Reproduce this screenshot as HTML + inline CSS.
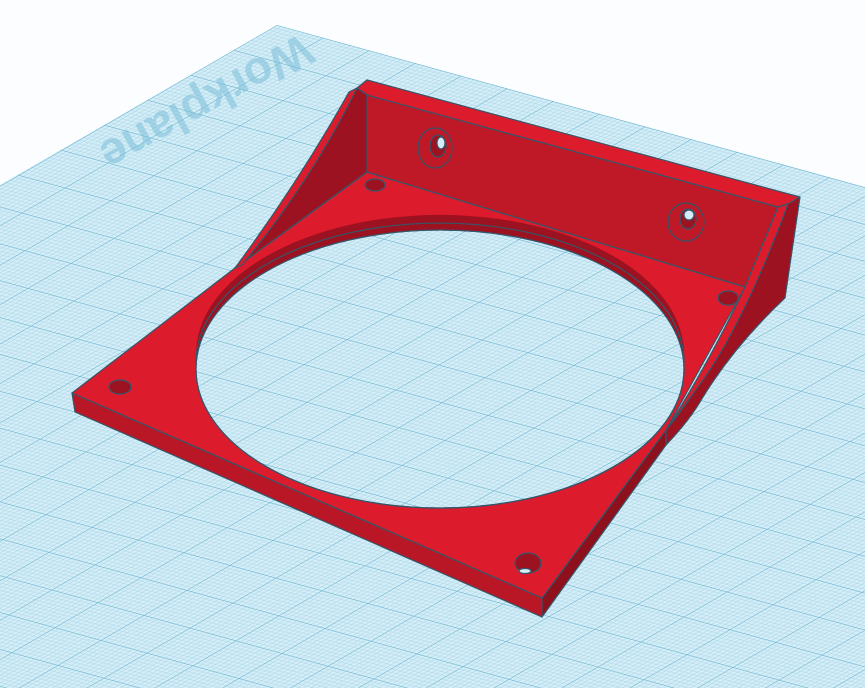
<!DOCTYPE html>
<html><head><meta charset="utf-8"><style>
html,body{margin:0;padding:0;background:#fbfdfe;}
svg{display:block}
</style></head><body>
<svg width="865" height="688" viewBox="0 0 865 688" xmlns="http://www.w3.org/2000/svg">
<defs>
<pattern id="g" patternUnits="userSpaceOnUse" width="10" height="10" patternTransform="matrix(4.6 1.27 -4.3 2.5 277 25)">
<rect width="10" height="10" fill="#d4edf6"/>
<g stroke="#9fd2e6" stroke-width="0.12">
<path d="M1 0V10M2 0V10M3 0V10M4 0V10M5 0V10M6 0V10M7 0V10M8 0V10M9 0V10M0 1H10M0 2H10M0 3H10M0 4H10M0 5H10M0 6H10M0 7H10M0 8H10M0 9H10"/>
</g>
<g stroke="#5fafcf" stroke-width="0.3"><path d="M0 0V10M0 0H10"/></g>
</pattern>
<clipPath id="top"><rect x="0" y="0" width="865" height="361"/></clipPath>
</defs>
<rect width="865" height="688" fill="#fbfdfe"/>
<polygon points="277,25 865,187 865,688 0,688 0,185" fill="url(#g)"/>
<text x="0" y="0" transform="translate(205,100) rotate(151)" text-anchor="middle" dominant-baseline="middle" font-family="Liberation Sans, sans-serif" font-weight="bold" font-size="46" fill="#7dbfd9" opacity="0.55">Workplane</text>

<g stroke="#35566a" stroke-width="1.2" stroke-linejoin="round">
<!-- plate front faces -->
<polygon points="72,393 542,598 542,617 75,412" fill="#b91726"/>
<polygon points="542,598 666,430 666,445 542,617" fill="#8e101c"/>
<!-- plate top with hole -->
<path fill-rule="evenodd" fill="#dc1b2c" d="M72,393 L235,268 L367,172 L745,287 L666,430 L542,598 Z M196,369 A244,139 0 1 0 684,369 A244,139 0 1 0 196,369 Z"/>
<!-- inner rim (back part of hole wall) -->
<path fill-rule="evenodd" fill="#9c1220" clip-path="url(#top)" stroke="none" d="M196,354 A244,139 0 1 0 684,354 A244,139 0 1 0 196,354 Z M196,369 A244,139 0 1 0 684,369 A244,139 0 1 0 196,369 Z"/>
<path fill="none" d="M196,362 A244,139 0 0 1 684,362"/>
<ellipse cx="440" cy="369" rx="244" ry="139" fill="none"/>
<!-- wall -->
<polygon points="367,95 778,207 745,287 367,172" fill="#bf1826"/>
<polygon points="357,88 367,80 800,197 788,204 778,207 367,95" fill="#dc1b2c"/>
<!-- left gusset -->
<path d="M235,268 Q305,185 357,88 L367,95 L367,172 Z" fill="#9c1220"/>
<path d="M235,268 Q300,180 349,92 L357,88 Q312,180 242,265 Z" fill="#dc1b2c"/>
<!-- right gusset -->
<path d="M788,204 L800,197 L785,298 Q735,345 703,397 Q690,420 666,445 L666,430 Q725,360 788,204 Z" fill="#9c1220"/>
<path d="M778,207 L788,204 Q745,320 703,380 Q685,405 666,430 Q705,370 745,287 Z" fill="#dc1b2c"/>
<!-- holes -->
<ellipse cx="120" cy="387" rx="11" ry="7" fill="#9c1220"/>
<ellipse cx="528" cy="563" rx="13" ry="10" fill="#9c1220"/>
<ellipse cx="525" cy="571" rx="6" ry="2.5" fill="#d4edf6"/>
<ellipse cx="375" cy="185" rx="10" ry="6" fill="#9c1220"/>
<ellipse cx="728" cy="298" rx="10" ry="7" fill="#9c1220"/>
<ellipse cx="435" cy="148" rx="17" ry="20" fill="#bf1826"/>
<ellipse cx="438" cy="146" rx="8" ry="11" fill="#9c1220"/>
<ellipse cx="441" cy="143" rx="4" ry="6" fill="#d4edf6"/>
<ellipse cx="686" cy="222" rx="18" ry="19" fill="#bf1826"/>
<ellipse cx="688" cy="219" rx="8" ry="10" fill="#9c1220"/>
<ellipse cx="689" cy="215" rx="5" ry="5" fill="#d4edf6"/>
</g>
</svg>
</body></html>
